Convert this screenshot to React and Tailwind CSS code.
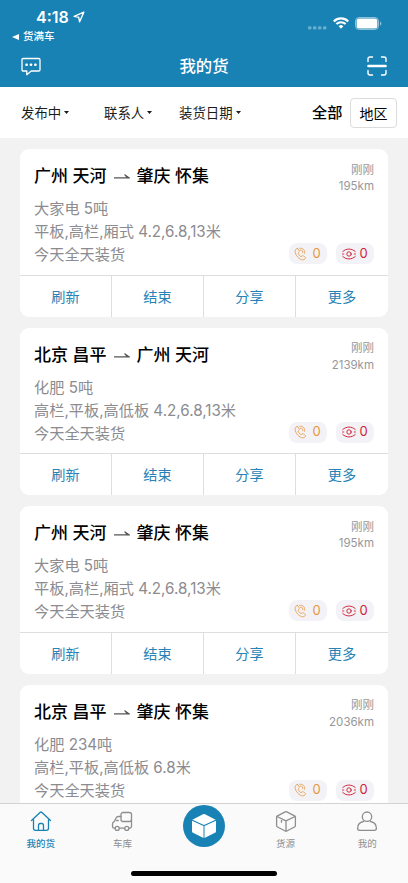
const orders = [
  { id: 1, from: "广州 天河", to: "肇庆 怀集", goods: "大家电 5吨", truck: "平板,高栏,厢式 4.2,6.8,13米", distance: "195km" },
  { id: 2, from: "北京 昌平", to: "广州 天河", goods: "化肥 5吨", truck: "高栏,平板,高低板 4.2,6.8,13米", distance: "2139km" },
  { id: 3, from: "广州 天河", to: "肇庆 怀集", goods: "大家电 5吨", truck: "平板,高栏,厢式 4.2,6.8,13米", distance: "195km" },
  { id: 4, from: "北京 昌平", to: "肇庆 怀集", goods: "化肥 234吨", truck: "高栏,平板,高低板 6.8米", distance: "2036km", collapsed: true },
];

const actions = ["刷新", "结束", "分享", "更多"];

function StatusBar() {
  return (
    <div className="flex h-[46px] justify-between">
      <div>
        <div className="flex items-center gap-[4px] pl-[36px] pt-[8px] text-[16px] font-semibold leading-[18px]">
          <span>4:18</span>
          <svg width="12" height="12" viewBox="0 0 12 12" fill="none" stroke="currentColor" strokeWidth="1.4" strokeLinejoin="round">
            <path d="M10.8 1.2 1.2 5.4l4.5.9.9 4.5z" />
          </svg>
        </div>
        <div className="flex items-center gap-[4px] pl-[12px] pt-[3px] text-[10.5px] font-medium leading-[15px]">
          <svg width="7" height="6" viewBox="0 0 7 6" fill="currentColor">
            <path d="M0 3 7 0v6z" />
          </svg>
          <span>货满车</span>
        </div>
      </div>
      <div className="flex h-[30px] items-start pr-[26px] pt-[17px]">
        <svg className="mr-[6px] mt-[8.5px] opacity-35" width="19" height="4" viewBox="0 0 19 4" fill="currentColor">
          <rect x="0" y="0.3" width="3.4" height="3.2" rx="1" />
          <rect x="5" y="0.3" width="3.4" height="3.2" rx="1" />
          <rect x="10" y="0.3" width="3.4" height="3.2" rx="1" />
          <rect x="15" y="0.3" width="3.4" height="3.2" rx="1" />
        </svg>
        <svg className="mr-[6px]" width="16" height="12" viewBox="0 0 16 12" fill="none" stroke="currentColor" strokeWidth="2.1">
          <path d="M.8 4.4a10.2 10.2 0 0 1 14.4 0" />
          <path d="M3.4 7.1a6.5 6.5 0 0 1 9.2 0" />
          <path d="M5.7 9.2a3.3 3.3 0 0 1 4.6 0L8 11.7z" fill="currentColor" stroke="none" />
        </svg>
        <svg width="27" height="13" viewBox="0 0 27 13" fill="none">
          <rect x=".5" y=".5" width="23" height="12" rx="3.6" stroke="currentColor" opacity=".5" />
          <rect x="1.6" y="1.6" width="20.8" height="9.8" rx="2.5" fill="currentColor" />
          <path d="M25 4.5v4c.8-.3 1.4-1 1.4-2s-.6-1.7-1.4-2z" fill="currentColor" opacity=".5" />
        </svg>
      </div>
    </div>
  );
}

function NavBar() {
  return (
    <div className="flex h-[40px] items-center justify-between px-[21px]">
      <svg width="20" height="19" viewBox="0 0 20 19" fill="none" stroke="currentColor" strokeWidth="1.3" strokeLinejoin="round">
        <path d="M2.3 1.5h15.4q1.300 0 1.300 1.300v9.900q0 1.300-1.300 1.300h-7.500l-4.400 3.700V14H2.3Q1 14 1 12.700V2.800q0-1.300 1.300-1.300z" />
        <g fill="currentColor" stroke="none">
          <rect x="4.4" y="6.600" width="2.400" height="2.400" rx=".7" />
          <rect x="8.800" y="6.600" width="2.400" height="2.400" rx=".7" />
          <rect x="13.200" y="6.600" width="2.400" height="2.400" rx=".7" />
        </g>
      </svg>
      <h1 className="text-[16.4px] font-medium leading-[20px]">我的货</h1>
      <svg width="20" height="20" viewBox="0 0 20 20" fill="none" stroke="currentColor" strokeWidth="1.4" strokeLinecap="round">
        <path d="M1 5.500V3q0-2 2-2h2.500M14.500 1H17q2 0 2 2v2.500M1 14.500V17q0 2 2 2h2.500M14.500 19H17q2 0 2-2v-2.500" />
        <path d="M1.500 10h17" strokeWidth="2.600" />
      </svg>
    </div>
  );
}

function Filter({ label, className }) {
  return (
    <button className={`flex items-center gap-[3px] ${className}`}>
      <span>{label}</span>
      <svg width="5" height="3" viewBox="0 0 5 3" fill="currentColor">
        <path d="M0 0h5L2.5 3z" />
      </svg>
    </button>
  );
}

function FilterBar() {
  return (
    <div className="flex h-[51px] shrink-0 items-center bg-white pl-[21px] pr-[11px] pt-[1px] text-[13.4px] text-[#1c1c1c]">
      <Filter label="发布中" className="w-[83px]" />
      <Filter label="联系人" className="w-[75px]" />
      <Filter label="装货日期" className="w-[133px]" />
      <span className="w-[38px] pt-[1px] text-[15.2px] font-medium text-black">全部</span>
      <button className="flex h-[30px] w-[47px] items-center justify-center rounded-[4px] border border-[#dcdcdc] text-[14px] text-black">
        地区
      </button>
    </div>
  );
}

function CallCount() {
  return (
    <div className="flex h-[21px] w-[38px] items-center justify-center gap-[5px] rounded-[8px] bg-[#f3f2f7] text-[13px] text-[#e8973d]">
      <svg width="13" height="14" viewBox="0 0 13 14" fill="none" stroke="currentColor" strokeWidth=".8" strokeLinecap="round" strokeLinejoin="round">
        <path d="M3.6 1.500C2.300 1.300 1 2.600 1.100 4.500c.3 3.800 4.200 8.300 7.700 8.300 1.500 0 2.600-.9 2.700-2.100 0-.6-2-2-2.700-2-.8 0-1.100 1-1.800.9C6 9.400 4.200 7.200 4.100 6.100c0-.7 1.100-.8 1.200-1.500 0-.8-1.100-2.900-1.700-3.100z" />
        <path d="M5.600 1.300c3.300-.6 5.700 1.700 5 5M6.400 3.200c1.800-.2 2.700.8 2.400 2.600" />
      </svg>
      <span>0</span>
    </div>
  );
}

function ViewCount() {
  return (
    <div className="flex h-[21px] w-[38px] items-center justify-center gap-[3px] rounded-[8px] bg-[#f3f2f7] text-[13px] text-[#cf2438]">
      <svg width="14" height="12" viewBox="0 0 14 12" fill="none" stroke="currentColor" strokeWidth=".95" strokeLinecap="round">
        <path d="M.7 3.6C2.500 1.900 4.500 1.100 7 1.100s4.500.8 6.300 2.500M.7 8.400c1.800 1.700 3.800 2.500 6.300 2.500s4.500-.8 6.300-2.500M.6 6h1.200M12.200 6h1.200" />
        <circle cx="7" cy="6" r="2.200" />
      </svg>
      <span>0</span>
    </div>
  );
}

function OrderCard({ order }) {
  return (
    <div className="mb-[11px] h-[167.5px] shrink-0 overflow-hidden rounded-[9px] bg-white">
      <div className={`flex h-[126.5px] justify-between px-[14px] ${order.collapsed ? "" : "border-b border-[#dedede]"}`}>
        <div className="whitespace-nowrap pt-[15px]">
          <div className="flex h-[24px] items-center text-[17px] font-medium leading-[24px] text-black">
            <span>{order.from}</span>
            <svg className="ml-[7px] mr-[7px] mt-[1px]" width="16" height="5" viewBox="0 0 16 5" fill="#555">
              <path d="M0 3.200h12.200L10 .8l1-.5 5 3.500v.6H0z" />
            </svg>
            <span>{order.to}</span>
          </div>
          <div className="mt-[9px] text-[15.2px] leading-[23px] text-[#8b8b90]">
            <p>{order.goods}</p>
            <p>{order.truck}</p>
            <p>今天全天装货</p>
          </div>
        </div>
        <div className="flex flex-col items-end justify-between pb-[10.5px] pt-[12.5px]">
          <div className="text-right text-[11.5px] leading-[16.5px] text-[#97979b]">
            <p>刚刚</p>
            <p>{order.distance}</p>
          </div>
          <div className="flex gap-[9.5px]">
            <CallCount />
            <ViewCount />
          </div>
        </div>
      </div>
      {!order.collapsed && (
        <div className="grid h-[41px] grid-cols-4 divide-x divide-[#dedede]">
          {actions.map((a) => (
            <button key={a} className="pt-[1px] text-[14.2px] text-[#2783b5]">
              {a}
            </button>
          ))}
        </div>
      )}
    </div>
  );
}

function Tab({ label, active, children }) {
  return (
    <button className={`flex flex-1 flex-col items-center pt-[6px] ${active ? "font-medium text-[#1982b5]" : "text-[#8e8e8e]"}`}>
      <svg width="22" height="22" viewBox="0 0 22 22" fill="none" stroke="currentColor" strokeWidth="1.3" strokeLinecap="round" strokeLinejoin="round">
        {children}
      </svg>
      <span className="mt-[4px] text-[9.5px] leading-[15px]">{label}</span>
    </button>
  );
}

function TabBar() {
  return (
    <div className="flex h-[80px] shrink-0 flex-col border-t border-[#d2d2d2] bg-[#fafafa]">
      <div className="flex h-[66px] items-start">
        <Tab label="我的货" active>
          <path d="M1.500 10.500 10 2.500q1-.9 2 0l8.500 8M3.500 9.500v8.800q0 2 2 2h11q2 0 2-2V9.500" />
          <path d="M8.500 20v-4.500q0-2 1.800-2h1.400q1.800 0 1.800 2V20" />
        </Tab>
        <Tab label="车库">
          <path d="M10 6.500H7.500q-1.800 0-2.600 1.700l-1.400 3-1.200 1.100q-.8.700-.8 1.700v2.500q0 1.700 1.700 1.700h.7M8.500 18.200h5M18.100 18.200h.6q1.800 0 1.800-1.800V10" />
          <rect x="10" y="2.500" width="10.500" height="9" rx="2" />
          <circle cx="6.200" cy="18.400" r="2" />
          <circle cx="15.800" cy="18.400" r="2" />
          <path d="M5.500 10.500h1.700" />
        </Tab>
        <div className="flex flex-1 justify-center pt-[1px]">
          <div className="flex size-[42px] items-center justify-center rounded-full bg-[#1982b5]">
            <svg width="26" height="26" viewBox="0 0 26 26" fill="white">
              <path d="M12 1.200q1-.5 2 0l10.600 5.500L13 12 1.400 6.700z" />
              <path d="M1 7.700 12.500 13v12L2 19.700q-1-.5-1-1.500z" />
              <path d="M25 7.700 13.500 13v12L24 19.700q1-.5 1-1.500z" />
            </svg>
          </div>
        </div>
        <Tab label="货源">
          <path d="M10.200 1.900q.8-.4 1.600 0l7.700 4q.9.500.9 1.400v8.300q0 .9-.9 1.400l-7.700 4q-.8.400-1.600 0l-7.700-4q-.9-.5-.9-1.400V7.300q0-.9.900-1.400z" />
          <path d="m2 6.500 9 4.400 9-4.400M11 10.900v10.200M6.500 8.800v3.400" />
        </Tab>
        <Tab label="我的">
          <circle cx="11" cy="6.700" r="4.700" />
          <path d="M7.500 11.500C3.800 12.300 1.600 15 1.600 18.300q0 2 2 2h14.800q2 0 2-2c0-3.300-2.200-6-5.900-6.800" />
        </Tab>
      </div>
      <div className="mx-auto mt-[1px] h-[5px] w-[146px] rounded-full bg-black" />
    </div>
  );
}

export default function App() {
  return (
    <div className="flex h-[883px] w-[408px] flex-col overflow-hidden bg-[#f2f2f2] font-[Inter,'Noto_Sans_CJK_SC',sans-serif]">
      <header className="h-[87px] shrink-0 bg-[#1982b5] text-white">
        <StatusBar />
        <NavBar />
      </header>
      <FilterBar />
      <main className="flex min-h-0 flex-1 flex-col overflow-hidden px-[20px] pt-[11px]">
        {orders.map((order) => (
          <OrderCard key={order.id} order={order} />
        ))}
      </main>
      <TabBar />
    </div>
  );
}
